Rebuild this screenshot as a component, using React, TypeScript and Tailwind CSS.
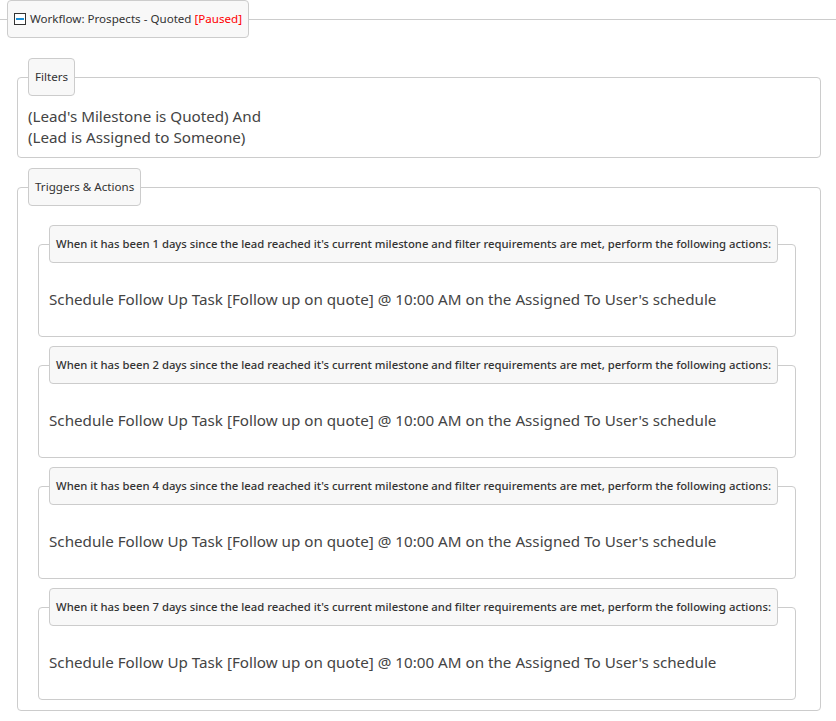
import React from 'react';

const FONT = "font-['Noto_Sans','Open_Sans',sans-serif]";

const TRIGGERS = [1, 2, 4, 7];

const MinusBox = () => (
  <svg width="12" height="12" viewBox="0 0 12 12" className="shrink-0">
    <rect x="0.5" y="0.5" width="11" height="11" fill="#fff" stroke="#333" />
    <rect x="2" y="5" width="8" height="2" fill="#1a8fd6" />
  </svg>
);

const Legend: React.FC<{ children: React.ReactNode; className?: string }> = ({ children, className = '' }) => (
  <legend
    className={`bg-[#f8f8f8] border border-[#ccc] rounded-[4px] px-[6px] h-[38px] flex items-center whitespace-nowrap text-[11.6px] text-[#333] ${className}`}
  >
    {children}
  </legend>
);

export default function App() {
  return (
    <div className={`${FONT} bg-white w-[836px] h-[721px]`}>
      <fieldset className="border-t border-b border-[#ccc] pb-[10px] pr-[15px]">
        <Legend className="ml-[7px] gap-[4px]">
          <MinusBox />
          <span>
            Workflow: Prospects - Quoted <span className="text-[#ff0000]">[Paused]</span>
          </span>
        </Legend>

        <fieldset className="mt-[20px] ml-[17px] border border-[#ccc] rounded-[4px] pl-[10px] pb-[9px]">
          <Legend>Filters</Legend>
          <div className="pt-[10px] text-[15.2px] leading-[21px] text-[#444]">
            <div>(Lead's Milestone is Quoted) And</div>
            <div>(Lead is Assigned to Someone)</div>
          </div>
        </fieldset>

        <fieldset className="mt-[10px] ml-[17px] border border-[#ccc] rounded-[4px] pl-[10px] pb-[10px]">
          <Legend>Triggers &amp; Actions</Legend>
          <div className="flex flex-col gap-[9px] pt-[19px] pl-[10px] pr-[24px]">
            {TRIGGERS.map(d => (
              <fieldset key={d} className="border border-[#ccc] rounded-[4px] pl-[10px] pb-[25px]">
                <Legend className="font-medium !text-[11.3px]">
                  When it has been {d} days since the lead reached it's current milestone and filter requirements are met, perform the following actions:
                </Legend>
                <div className="pt-[24px] text-[15.2px] leading-[24px] text-[#444]">
                  Schedule Follow Up Task [Follow up on quote] @ 10:00 AM on the Assigned To User's schedule
                </div>
              </fieldset>
            ))}
          </div>
        </fieldset>
      </fieldset>
    </div>
  );
}
